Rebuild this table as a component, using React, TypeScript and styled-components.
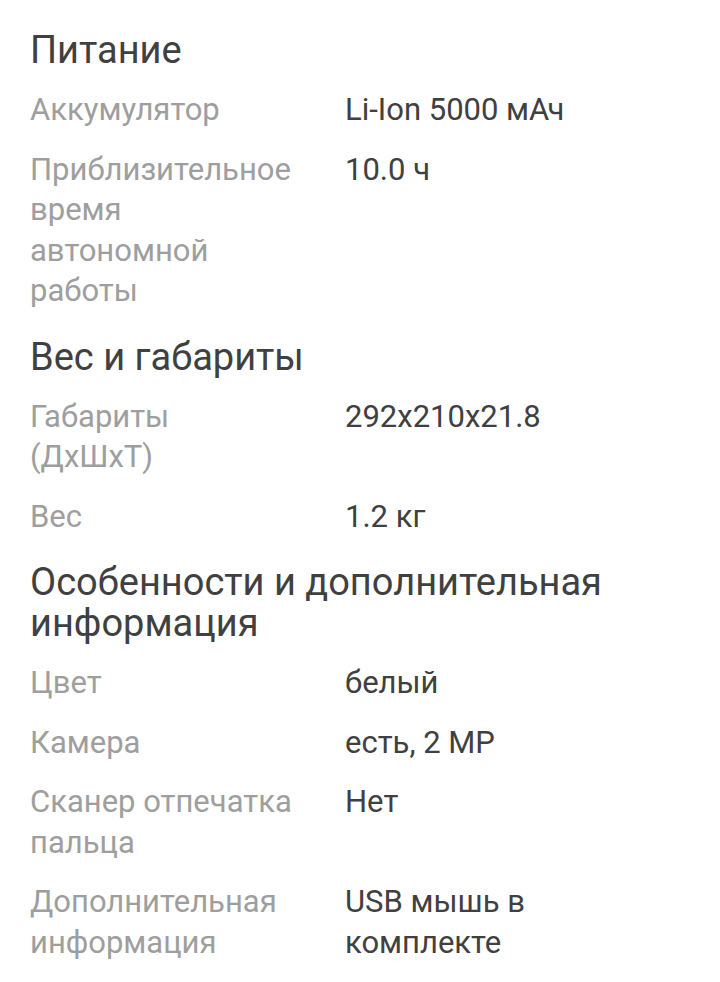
import React from "react";
import styled, { createGlobalStyle } from "styled-components";

const GlobalStyle = createGlobalStyle`
  html, body {
    margin: 0;
    padding: 0;
    background: #ffffff;
  }
  body {
    font-family: Roboto, "Noto Sans", Arial, sans-serif;
    -webkit-font-smoothing: antialiased;
  }
`;

const Page = styled.div`
  display: flex;
  flex-direction: column;
  gap: 25px;
  padding: 30px 30px 0 30px;
  width: 720px;
  box-sizing: border-box;
  overflow: hidden;
`;

const Section = styled.section`
  display: flex;
  flex-direction: column;
  gap: 19px;
`;

const Heading = styled.h2`
  margin: 0;
  font-weight: 400;
  font-size: 38px;
  line-height: 41px;
  color: #404040;
`;

const Row = styled.div`
  display: grid;
  grid-template-columns: 264px 315px;
  column-gap: 51px;
  font-size: 31px;
  line-height: 40.5px;
`;

const Label = styled.div`
  color: #9e9e9e;
`;

const Value = styled.div`
  color: #404040;
`;

type Spec = { label: string; value: string };
type Group = { title: string; items: Spec[] };

const groups: Group[] = [
  {
    title: "Питание",
    items: [
      { label: "Аккумулятор", value: "Li-Ion 5000 мАч" },
      { label: "Приблизительное время автономной работы", value: "10.0 ч" },
    ],
  },
  {
    title: "Вес и габариты",
    items: [
      { label: "Габариты (ДхШхТ)", value: "292x210x21.8" },
      { label: "Вес", value: "1.2 кг" },
    ],
  },
  {
    title: "Особенности и дополнительная информация",
    items: [
      { label: "Цвет", value: "белый" },
      { label: "Камера", value: "есть, 2 MP" },
      { label: "Сканер отпечатка пальца", value: "Нет" },
      { label: "Дополнительная информация", value: "USB мышь в комплекте" },
    ],
  },
];

export default function App() {
  return (
    <>
      <GlobalStyle />
      <Page>
        {groups.map((g) => (
          <Section key={g.title}>
            <Heading>{g.title}</Heading>
            {g.items.map((it) => (
              <Row key={it.label}>
                <Label>{it.label}</Label>
                <Value>{it.value}</Value>
              </Row>
            ))}
          </Section>
        ))}
      </Page>
    </>
  );
}
